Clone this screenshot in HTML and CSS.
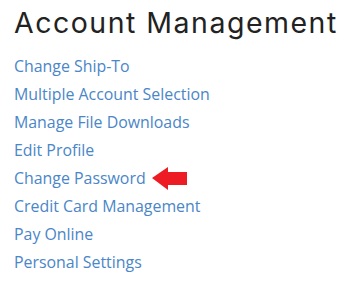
FILE: index.html
```html
<!DOCTYPE html>
<html>
<head>
<meta charset="utf-8">
<link rel="stylesheet" href="styles.css">
</head>
<body>
<div class="panel">
  <h1 class="title">Account Management</h1>
  <ul class="links">
    <li><a href="#">Change Ship-To</a></li>
    <li><a href="#">Multiple Account Selection</a></li>
    <li><a href="#">Manage File Downloads</a></li>
    <li><a href="#">Edit Profile</a></li>
    <li class="marked"><a href="#">Change Password</a>
      <svg class="arrow" width="36" height="24" viewBox="0 0 36 24"><polygon points="0,12 16,1 16,6 35,6 35,19 16,19 16,24" fill="#ed1c24"/></svg>
    </li>
    <li><a href="#">Credit Card Management</a></li>
    <li><a href="#">Pay Online</a></li>
    <li><a href="#">Personal Settings</a></li>
  </ul>
</div>
</body>
</html>
```

FILE: styles.css
```css
html, body { margin: 0; padding: 0; background: #fff; }
.panel { padding: 6px 0 0 14px; }
.title {
  margin: 0;
  font-family: "Inter", sans-serif;
  font-weight: 400;
  font-size: 28.5px;
  line-height: 34px;
  color: #222;
  letter-spacing: 1.5px;
}
.links {
  list-style: none;
  margin: 12px 0 0 0;
  padding: 0;
  display: flex;
  flex-direction: column;
}
.links li {
  display: flex;
  align-items: center;
  height: 28px;
  font-family: "Open Sans", sans-serif;
  font-size: 15.9px;
}
.links a { color: #4a86c8; text-decoration: none; }
.arrow { margin-left: 6px; display: block; }
```
